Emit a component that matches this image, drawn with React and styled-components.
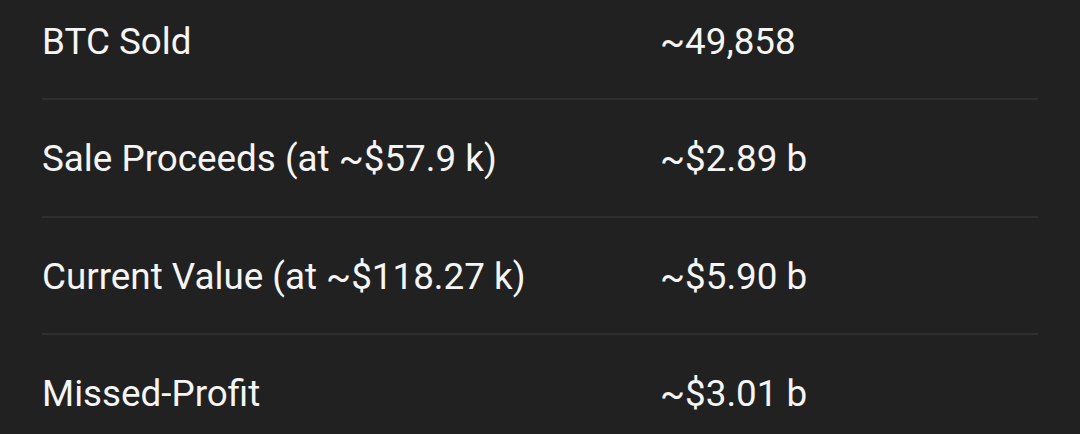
import React from 'react'
import styled, { createGlobalStyle } from 'styled-components'

const GlobalStyle = createGlobalStyle`
  html, body {
    margin: 0;
    padding: 0;
    background: #212121;
  }
  body {
    font-family: Roboto, 'Liberation Sans', sans-serif;
    -webkit-font-smoothing: antialiased;
  }
`

const Page = styled.div`
  width: 1080px;
  height: 434px;
  overflow: hidden;
  background: #212121;
`

const Table = styled.div`
  margin: -17.5px 0 0 42px;
  width: 996px;
`

const Row = styled.div`
  display: grid;
  grid-template-columns: 618px 1fr;
  align-items: center;
  height: 115.5px;
  border-bottom: ${({ $last }) => ($last ? 'none' : '2px solid #2e2e2e')};
`

const Cell = styled.div`
  color: #f5f5f5;
  font-size: 36.8px;
  line-height: 1;
  padding-top: 4px;
  white-space: nowrap;
`

const rows = [
  ['BTC Sold', '~49,858'],
  ['Sale Proceeds (at ~$57.9 k)', '~$2.89 b'],
  ['Current Value (at ~$118.27 k)', '~$5.90 b'],
  ['Missed-Profit', '~$3.01 b'],
]

const App = () => (
  <Page>
    <GlobalStyle />
    <Table>
      {rows.map(([label, value], i) => (
        <Row key={label} $last={i === rows.length - 1}>
          <Cell>{label}</Cell>
          <Cell>{value}</Cell>
        </Row>
      ))}
    </Table>
  </Page>
)

export default App
